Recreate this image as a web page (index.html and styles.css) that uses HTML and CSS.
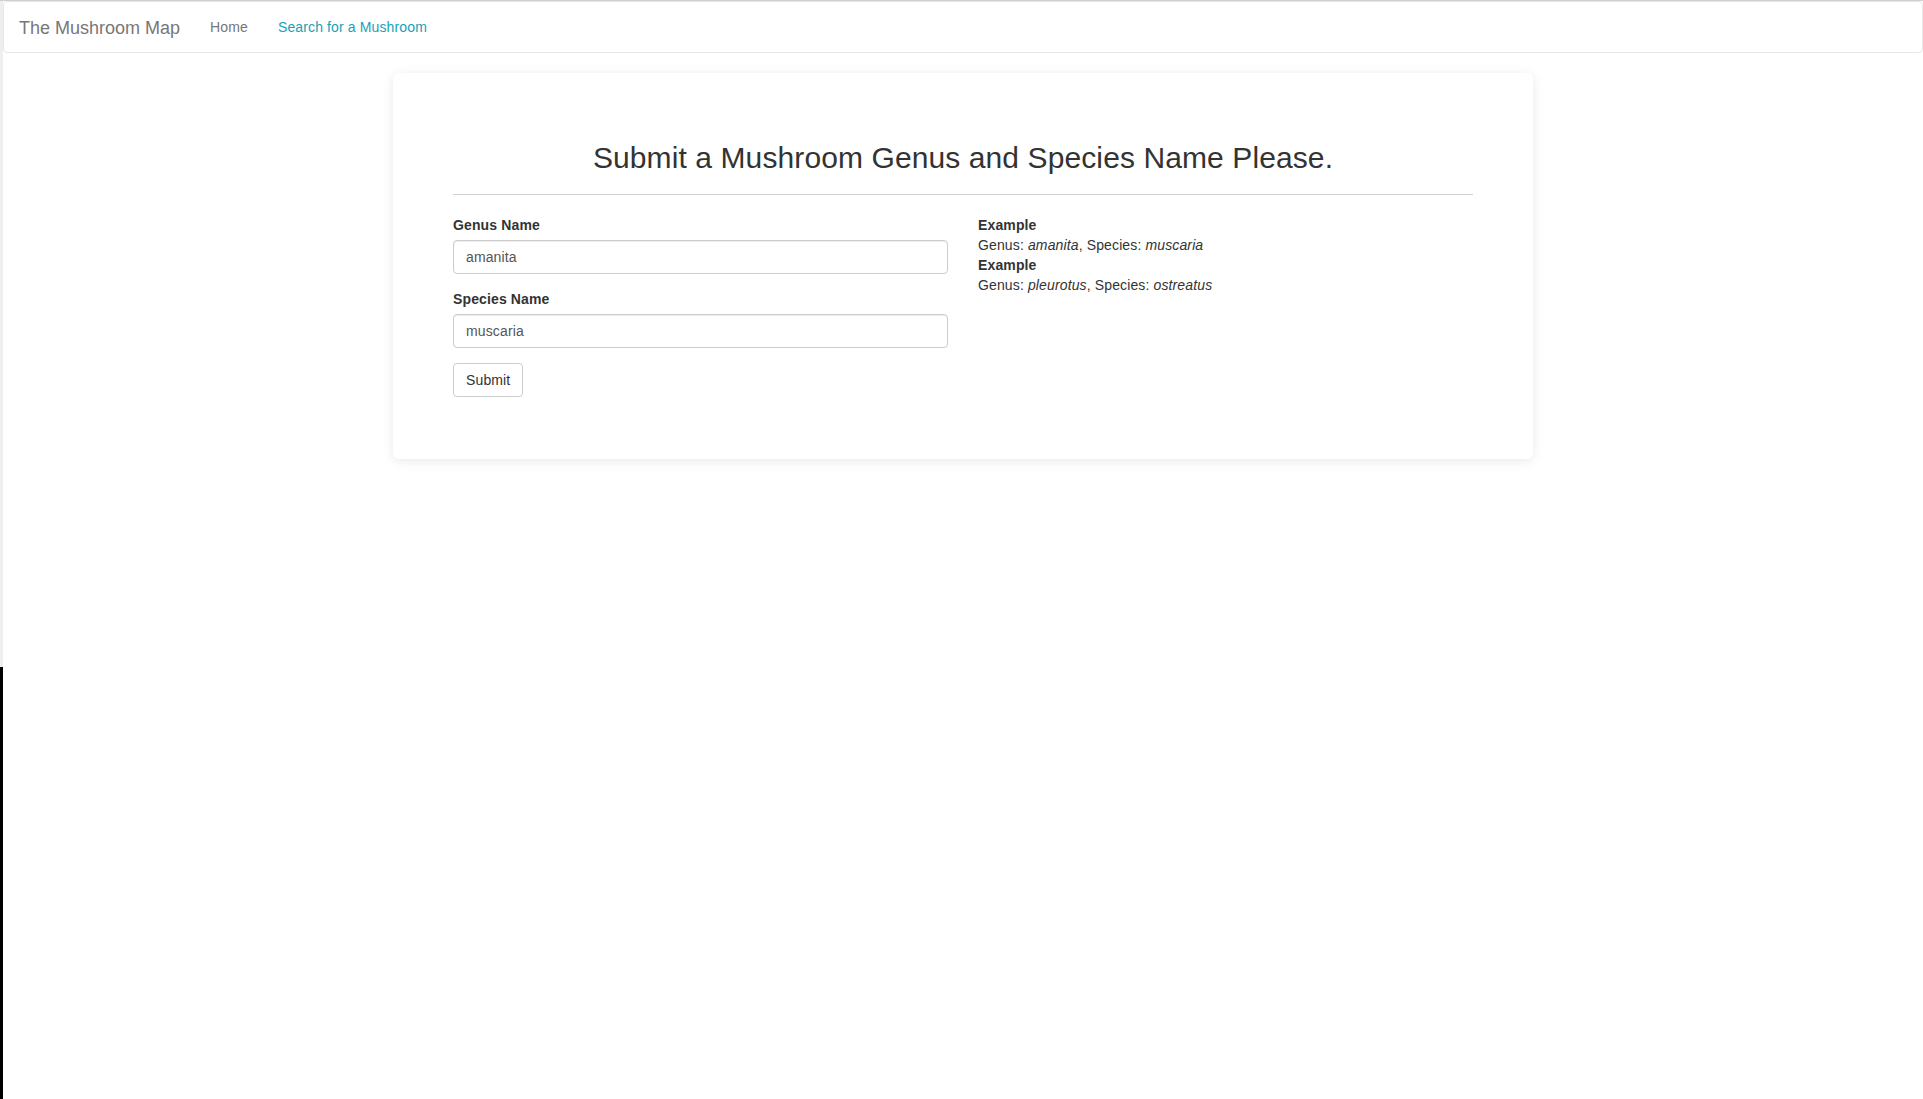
FILE: index.html
```html
<!DOCTYPE html>
<html lang="en">
<head>
<meta charset="utf-8">
<title>The Mushroom Map</title>
<link rel="stylesheet" href="styles.css">
</head>
<body>
<div class="strip"></div>
<div class="page">
  <nav class="navbar">
    <a class="brand" href="#">The Mushroom Map</a>
    <ul class="nav">
      <li><a href="#">Home</a></li>
      <li><a class="active" href="#">Search for a Mushroom</a></li>
    </ul>
  </nav>
  <div class="card">
    <h2 class="title">Submit a Mushroom Genus and Species Name Please.</h2>
    <hr class="rule">
    <div class="row">
      <form class="col">
        <div class="group">
          <label class="label" for="genus">Genus Name</label>
          <input class="input" id="genus" type="text" value="amanita">
        </div>
        <div class="group">
          <label class="label" for="species">Species Name</label>
          <input class="input" id="species" type="text" value="muscaria">
        </div>
        <button class="btn" type="button">Submit</button>
      </form>
      <div class="col examples">
        <div class="ex-title">Example</div>
        <div>Genus: <em>amanita</em>, Species: <em>muscaria</em></div>
        <div class="ex-title">Example</div>
        <div>Genus: <em>pleurotus</em>, Species: <em>ostreatus</em></div>
      </div>
    </div>
  </div>
</div>
</body>
</html>
```
FILE: styles.css
```css
* { box-sizing: border-box; }
html, body { height: 100%; }
body {
  margin: 0;
  display: flex;
  background: #fff;
  border-top: 1px solid #cfcfcf;
  font-family: "Liberation Sans", Arial, Helvetica, sans-serif;
  font-size: 14px;
  line-height: 20px;
  letter-spacing: 0.13px;
  color: #333;
}
.strip {
  width: 3px;
  flex: none;
  background: linear-gradient(to bottom, #efeeec 0, #efeeec 666px, #000 666px, #000 100%);
}
.page {
  flex: 1;
  min-width: 0;
}
.navbar {
  display: flex;
  align-items: center;
  min-height: 52px;
  padding: 0 15px;
  border: 1px solid #e7e7e7;
  border-radius: 4px;
  background: #fff;
}
.brand {
  font-size: 18px;
  line-height: 20px;
  letter-spacing: 0;
  padding: 16px 15px 14px 0;
  color: #777;
  text-decoration: none;
}
.nav {
  display: flex;
  list-style: none;
  margin: 0;
  padding: 0;
}
.nav a {
  display: block;
  padding: 15px;
  color: #777;
  text-decoration: none;
}
.nav a.active { color: #17a2b8; }
.card {
  width: 1140px;
  margin: 20px auto 0;
  padding: 68px 60px 62px;
  background: #fff;
  border-radius: 6px;
  box-shadow: 0 2px 12px rgba(0, 0, 0, 0.09);
}
.title {
  margin: 0;
  font-size: 30px;
  line-height: 33px;
  font-weight: 500;
  letter-spacing: 0.1px;
  text-align: center;
  color: #333;
}
.rule {
  margin: 20px 0 20px;
  border: 0;
  border-top: 1px solid #d2d2d2;
}
.row {
  display: flex;
  gap: 30px;
}
.col {
  flex: 1;
  margin: 0;
}
.group { margin-bottom: 15px; }
.label {
  display: block;
  margin-bottom: 5px;
  font-weight: 700;
}
.input {
  display: block;
  width: 100%;
  height: 34px;
  padding: 6px 12px;
  font-family: inherit;
  font-size: 14px;
  line-height: 20px;
  letter-spacing: inherit;
  color: #555;
  background: #fff;
  border: 1px solid #ccc;
  border-radius: 4px;
  box-shadow: inset 0 1px 1px rgba(0, 0, 0, 0.075);
}
.btn {
  display: block;
  height: 34px;
  padding: 6px 12px;
  font-family: inherit;
  font-size: 14px;
  line-height: 20px;
  letter-spacing: inherit;
  color: #333;
  background: #fff;
  border: 1px solid #ccc;
  border-radius: 4px;
}
.examples em { font-style: italic; }
.ex-title { font-weight: 700; }
```
